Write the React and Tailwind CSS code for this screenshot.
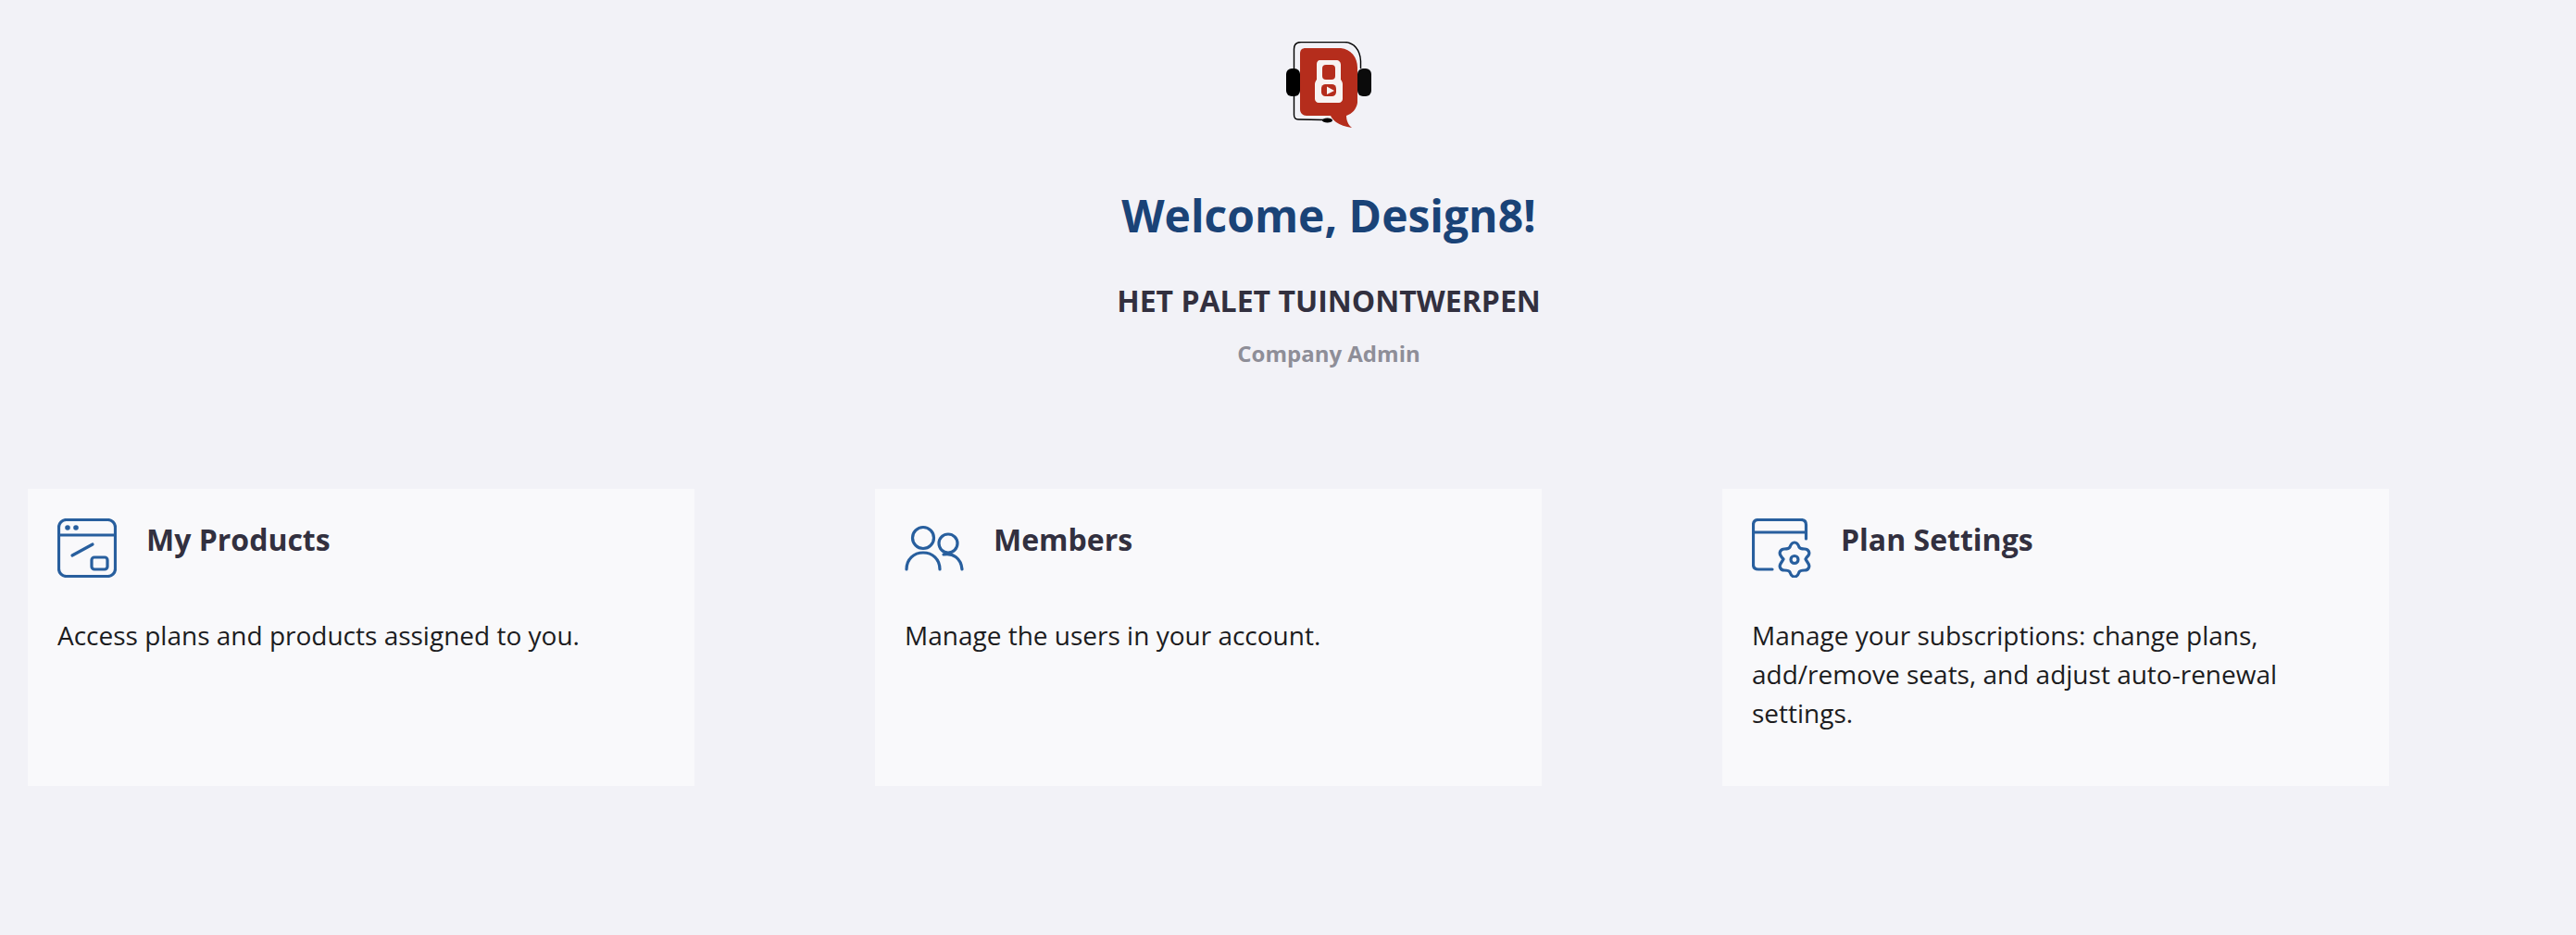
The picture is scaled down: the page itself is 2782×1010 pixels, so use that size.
import React from "react"

function Logo() {
    return <svg className="w-[92px] h-[94px]" viewBox="30 15 92 94" fill="none">
        <path d="M38.5 44 L38.5 23 C38.5 18 41 15.5 46 15.5 L93 15.5 C103 15.5 110 24 110.5 36 L110.5 44" stroke="#000" strokeWidth="1.4" />
        <path d="M38.5 74 L38.5 94 C38.5 97 40 99 43 99 L70 99.5" stroke="#000" strokeWidth="1.4" />
        <rect x="30" y="44" width="15" height="30" rx="6" fill="#000" />
        <rect x="107" y="44" width="15" height="30" rx="6" fill="#0b0b0b" />
        <ellipse cx="74.5" cy="100" rx="5.5" ry="2.6" fill="#000" />
        <path d="M51 22 L89 22 C100 23 107 32 107 43 L107 81 C106 88 101 93 95 95 C95 100 97 105 101 108 C94 107 88 105 84 102 C81 100 79 97 78 95 L52 95 C48 95 45 92 45 88 L45 28 C45 24 47 22 51 22 Z" fill="#b52d1c" />
        <path d="M67 35 L84 35 C87 35 89 37 89 40 L89 56 C90 57 91 59 91 61 L91 77 C91 79 89 81 87 81 L65 81 C63 81 61 79 61 77 L61 61 C61 59 62 57 63 56 L63 40 C63 37 64 35 67 35 Z" fill="#f7f3f2" />
        <rect x="69" y="40" width="14" height="16" rx="4" fill="#b52d1c" />
        <rect x="68" y="61" width="16" height="13" rx="4.5" fill="#b52d1c" />
        <path d="M74 63.5 L82 68 L74 72 Z" fill="#f7f3f2" />
    </svg>
}

function ProductsIcon() {
    return <svg className="w-16 h-16" viewBox="0 0 64 64" fill="none" stroke="#285f9e" strokeWidth="3.2" strokeLinecap="round" strokeLinejoin="round">
        <rect x="1.5" y="1.5" width="61" height="61" rx="8" />
        <path d="M1.5 18 L62.5 18" />
        <circle cx="11" cy="10" r="1.2" fill="#285f9e" />
        <circle cx="20" cy="10" r="1.2" fill="#285f9e" />
        <path d="M16 40 L38 28" />
        <rect x="37" y="42" width="17" height="13" rx="3" />
    </svg>
}

function MembersIcon() {
    return <svg className="w-16 h-16" viewBox="0 0 64 64" fill="none" stroke="#285f9e" strokeWidth="3.2" strokeLinecap="round" strokeLinejoin="round">
        <circle cx="20" cy="21" r="11.5" />
        <path d="M2 55 C2 44 10 37 20 37 C30 37 38 44 38 55" />
        <circle cx="47" cy="27" r="10" />
        <path d="M42 39 C52 37 61 43 62 55" />
    </svg>
}

function SettingsIcon() {
    return <svg className="w-16 h-16" viewBox="0 0 64 64" fill="none" stroke="#285f9e" strokeWidth="3.2" strokeLinecap="round" strokeLinejoin="round">
        <path d="M22 55 L7 55 C3.5 55 1.5 53 1.5 50 L1.5 7 C1.5 3.5 3.5 1.5 7 1.5 L53 1.5 C56.5 1.5 58.5 3.5 58.5 7 L58.5 22" />
        <path d="M1.5 15 L58.5 15" />
        <path d="M46 26 C49 26 50 28 51 31 C52 33 54 33 57 33 C61 33 63 37 61 40 C59 42 58 44 58 44 C59 46 60 47 61 49 C63 52 61 56 57 56 C54 56 52 56 51 58 C50 61 49 63 46 63 C43 63 42 61 41 58 C40 56 38 56 35 56 C31 56 29 52 31 49 C32 47 33 46 34 44 C33 43 32 42 31 40 C29 37 31 33 35 33 C38 33 40 33 41 31 C42 28 43 26 46 26 Z" />
        <circle cx="46" cy="44.5" r="4" />
    </svg>
}

function Card({icon, title, text}) {
    return <div className="bg-[#f9f9fb] h-[321px] px-8 pt-8 text-[28px]">
        <div className="flex items-start gap-8 h-[105px]">
            {icon}
            <h3 className="text-[32px] leading-[40px] font-bold text-[#32303f] mt-[3px]">{title}</h3>
        </div>
        <p className="leading-[42px] text-[#1c1c1e]">{text}</p>
    </div>
}

export default function App() {
    return <div className="min-h-[1010px] bg-[#f2f2f7] overflow-hidden font-['Open_Sans',sans-serif]">
        <div className="flex flex-col items-center pl-[88px] pt-[45px]">
            <Logo />
            <h1 className="mt-[70px] text-[48px] leading-[48px] font-bold text-[#1a4377]">Welcome, Design8!</h1>
            <h2 className="mt-[48px] text-[32px] leading-[40px] font-bold text-[#32303f]">HET PALET TUINONTWERPEN</h2>
            <p className="mt-[21px] text-[24px] leading-[32px] font-bold text-[#8e8e98]">Company Admin</p>
        </div>
        <div className="grid grid-cols-3 w-[2550px] gap-[195px] ml-[30px] mt-[130px]">
            <Card icon={<ProductsIcon />} title="My Products" text="Access plans and products assigned to you." />
            <Card icon={<MembersIcon />} title="Members" text="Manage the users in your account." />
            <Card icon={<SettingsIcon />} title="Plan Settings" text="Manage your subscriptions: change plans, add/remove seats, and adjust auto-renewal settings." />
        </div>
    </div>
}
